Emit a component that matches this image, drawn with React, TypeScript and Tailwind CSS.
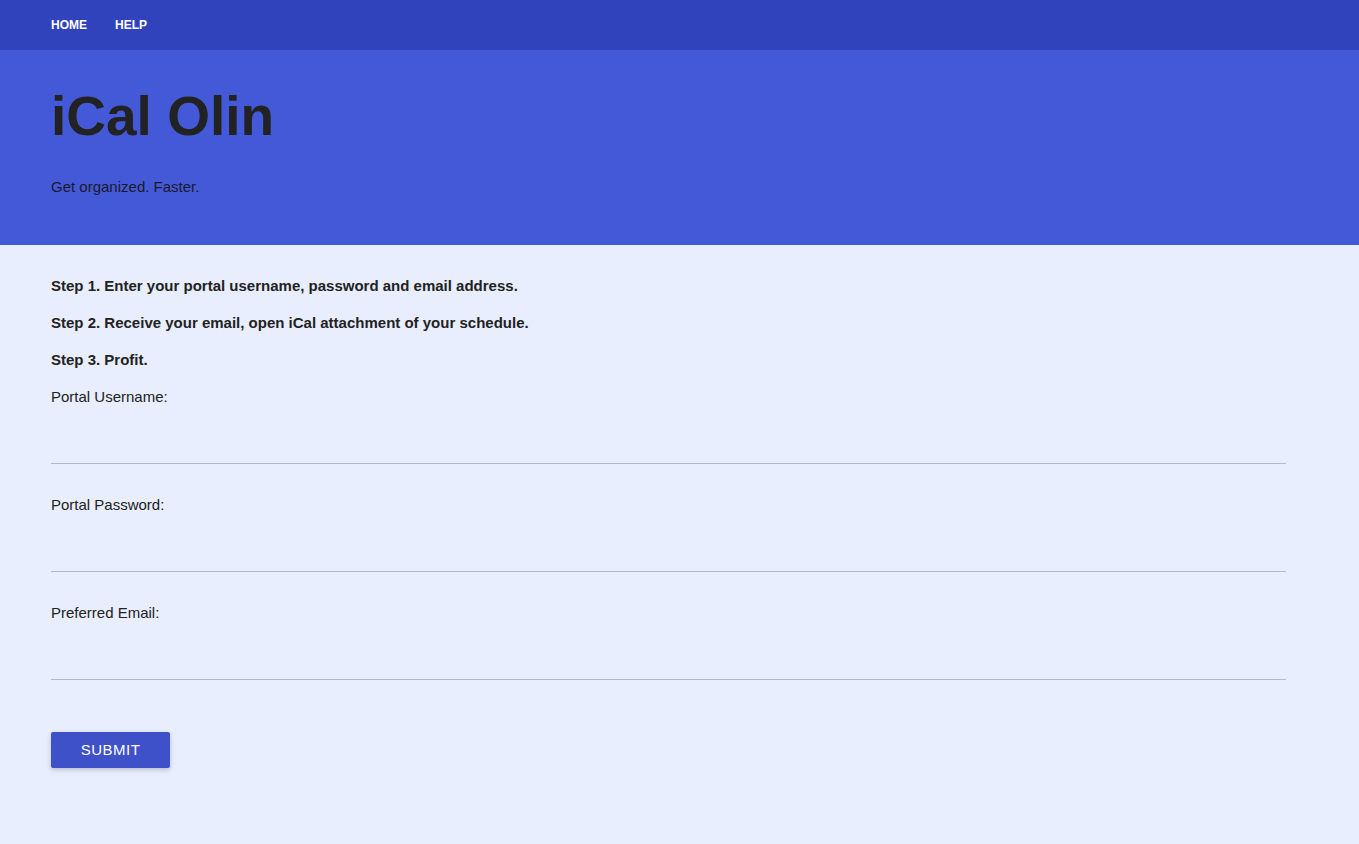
import React from "react";

export default function App() {
  const fields = ["Portal Username:", "Portal Password:", "Preferred Email:"];
  return (
    <div
      className="min-h-[844px] w-full bg-[#e8eefe] text-[#222222]"
      style={{ fontFamily: '"Liberation Sans", Arial, sans-serif' }}
    >
      <nav className="flex h-[50px] items-center gap-[28px] bg-[#3043bc] px-[51px] text-[12px] font-bold text-white">
        <span>HOME</span>
        <span>HELP</span>
      </nav>
      <header className="h-[195px] bg-[#4459d8] px-[51px] pt-[34px]">
        <h1 className="text-[55px] font-bold leading-[64px] text-[#222222]">iCal Olin</h1>
        <p className="mt-[30px] text-[15px] leading-[17px] text-[#1a1a2a]">Get organized. Faster.</p>
      </header>
      <main className="w-[1286px] pl-[51px] pt-[22px]">
        <p className="text-[15px] font-bold leading-[37px]">Step 1. Enter your portal username, password and email address.</p>
        <p className="text-[15px] font-bold leading-[37px]">Step 2. Receive your email, open iCal attachment of your schedule.</p>
        <p className="text-[15px] font-bold leading-[37px]">Step 3. Profit.</p>
        {fields.map((f) => (
          <div key={f} className="mb-[22px]">
            <label className="block text-[15px] leading-[37px]">{f}</label>
            <div className="h-[49px] border-b border-[#b4b8c8]" />
          </div>
        ))}
        <button className="mt-[52px] flex h-[36px] w-[119px] items-center justify-center rounded-[2px] bg-[#3e51c9] text-[15px] tracking-[0.5px] text-white shadow-[0_2px_5px_rgba(0,0,0,0.2)]">
          SUBMIT
        </button>
      </main>
    </div>
  );
}
